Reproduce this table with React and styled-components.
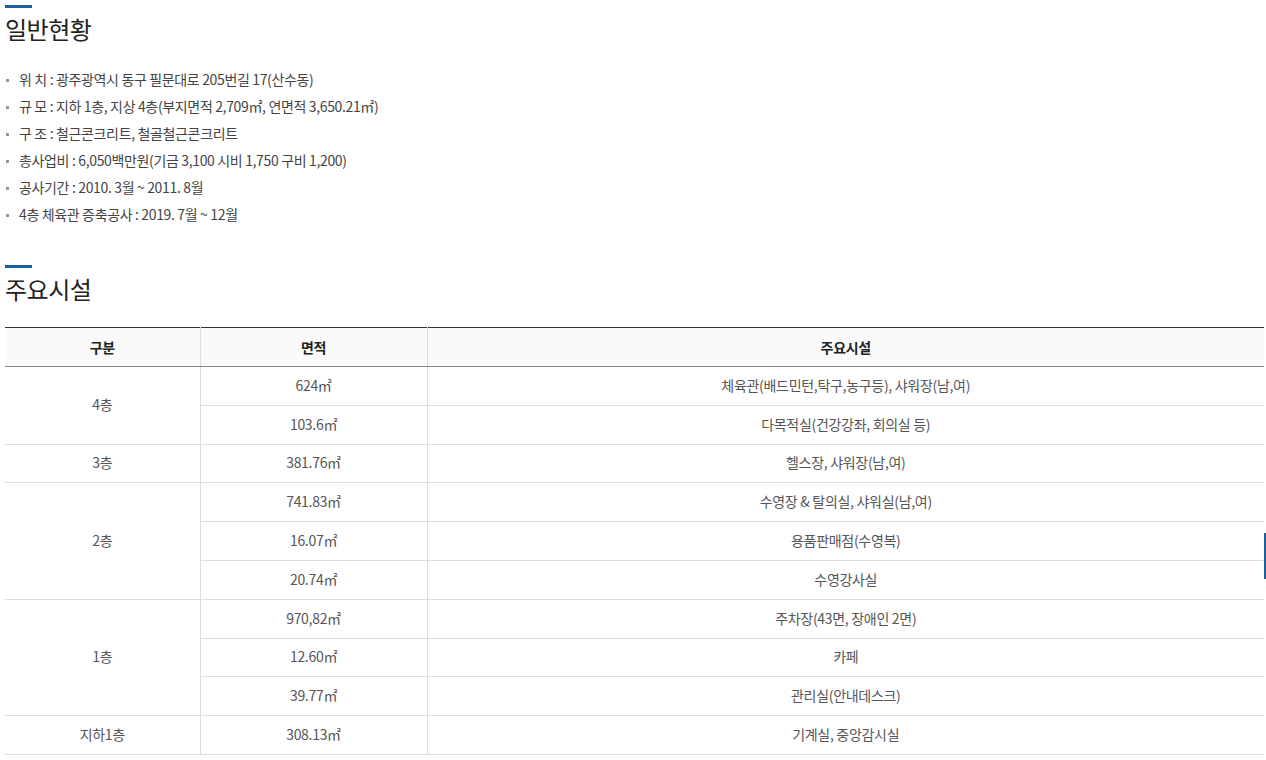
import React from 'react'
import styled, { createGlobalStyle } from 'styled-components'

const GlobalStyle = createGlobalStyle`
  html, body {
    margin: 0;
    padding: 0;
    background: #fff;
  }
  body {
    font-family: "Noto Sans CJK KR", "Noto Sans", sans-serif;
    color: #444;
  }
`

const overview = [
    { label: '위 치', text: '광주광역시 동구 필문대로 205번길 17(산수동)' },
    { label: '규 모', text: '지하 1층, 지상 4층(부지면적 2,709㎡, 연면적 3,650.21㎡)' },
    { label: '구 조', text: '철근콘크리트, 철골철근콘크리트' },
    { label: '총사업비', text: '6,050백만원(기금 3,100 시비 1,750 구비 1,200)' },
    { label: '공사기간', text: '2010. 3월 ~ 2011. 8월' },
    { label: '4층 체육관 증축공사', text: '2019. 7월 ~ 12월' },
]

const floors = [
    {
        name: '4층',
        rooms: [
            ['624㎡', '체육관(배드민턴,탁구,농구등), 샤워장(남,여)'],
            ['103.6㎡', '다목적실(건강강좌, 회의실 등)'],
        ],
    },
    { name: '3층', rooms: [['381.76㎡', '헬스장, 샤워장(남,여)']] },
    {
        name: '2층',
        rooms: [
            ['741.83㎡', '수영장 & 탈의실, 샤워실(남,여)'],
            ['16.07㎡', '용품판매점(수영복)'],
            ['20.74㎡', '수영강사실'],
        ],
    },
    {
        name: '1층',
        rooms: [
            ['970,82㎡', '주차장(43면, 장애인 2면)'],
            ['12.60㎡', '카페'],
            ['39.77㎡', '관리실(안내데스크)'],
        ],
    },
    { name: '지하1층', rooms: [['308.13㎡', '기계실, 중앙감시실']] },
]

const App = () => {
    return (
        <Page>
            <GlobalStyle />
            <Section>
                <TitleBar />
                <Title>일반현황</Title>
                <InfoList>
                    {overview.map((item) => (
                        <InfoItem key={item.label}>
                            {item.label} : {item.text}
                        </InfoItem>
                    ))}
                </InfoList>
            </Section>
            <Section spaced>
                <TitleBar />
                <Title>주요시설</Title>
                <Table>
                    <colgroup>
                        <col style={{ width: 195 }} />
                        <col style={{ width: 227 }} />
                        <col />
                    </colgroup>
                    <thead>
                        <tr>
                            <Th first>구분</Th>
                            <Th>면적</Th>
                            <Th>주요시설</Th>
                        </tr>
                    </thead>
                    <tbody>
                        {floors.map((floor) =>
                            floor.rooms.map((room, i) => (
                                <Row key={floor.name + i}>
                                    {i === 0 && (
                                        <Td first rowSpan={floor.rooms.length}>
                                            {floor.name}
                                        </Td>
                                    )}
                                    <Td>{room[0]}</Td>
                                    <Td>{room[1]}</Td>
                                </Row>
                            ))
                        )}
                    </tbody>
                </Table>
            </Section>
            <EdgeMarker />
        </Page>
    )
}

export default App

const Page = styled.div`
    width: 1266px;
    padding: 5px 2px 0 5px;
    box-sizing: border-box;
`

const Section = styled.section`
    margin-top: ${({ spaced }) => (spaced ? '37px' : '0')};
`

const TitleBar = styled.div`
    width: 27px;
    height: 3px;
    background: #1a5f9e;
`

const Title = styled.h2`
    margin: 5px 0 0;
    font-size: 24px;
    line-height: 32px;
    font-weight: 400;
    color: #222;
    letter-spacing: -0.5px;
`

const InfoList = styled.ul`
    list-style: none;
    margin: 21px 0 0;
    padding: 0;
`

const InfoItem = styled.li`
    position: relative;
    padding-left: 14px;
    font-size: 14px;
    line-height: 27px;
    color: #444;
    letter-spacing: -0.35px;

    &::before {
        content: '';
        position: absolute;
        left: 1px;
        top: 13px;
        width: 3px;
        height: 3px;
        background: #8a9aaa;
    }
`

const Table = styled.table`
    width: 1259px;
    margin-top: 22px;
    border-collapse: collapse;
    table-layout: fixed;
    border-top: 1px solid #333;
    font-size: 14px;
    letter-spacing: -0.3px;
`

const Th = styled.th`
    height: 38px;
    padding: 0;
    background: #fafafa;
    color: #222;
    font-weight: 700;
    border-bottom: 1px solid #888;
    border-left: ${({ first }) => (first ? 'none' : '1px solid #ddd')};
    text-align: center;
`

const Row = styled.tr`
    height: 38.8px;
`

const Td = styled.td`
    padding: 0 0 2px;
    text-align: center;
    color: #555;
    border-bottom: 1px solid #ddd;
    border-left: ${({ first }) => (first ? 'none' : '1px solid #ddd')};
`

const EdgeMarker = styled.div`
    position: fixed;
    right: 0;
    top: 533px;
    width: 2px;
    height: 46px;
    background: #1a5f9e;
`
